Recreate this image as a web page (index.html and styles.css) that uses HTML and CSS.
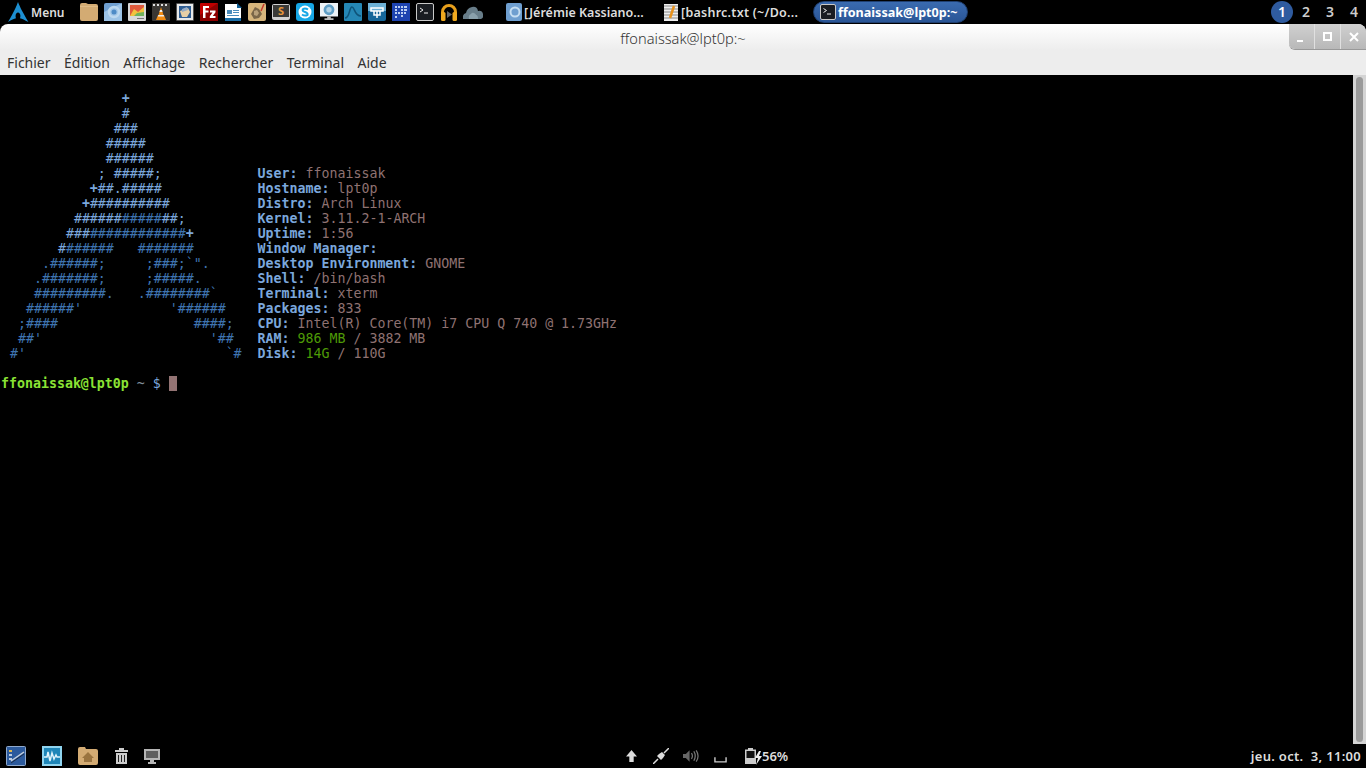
FILE: index.html
```html
<!DOCTYPE html>
<html>
<head>
	<meta charset="utf-8">
	<title>ffonaissak@lpt0p:~</title>
	<link rel="stylesheet" href="styles.css">
</head>
<body>
	<!-- top panel -->
	<div class="panel top">
		<div class="menu">
			<svg class="arch" viewBox="0 0 22 20"><path fill="#1d8fd1" d="M11 0C9.500 4 7 10 1 20c3.500-2.200 6-3.400 8-3.800-.4-.8-.5-1.600-.4-2.400 0-2 1.100-3.300 2.400-3.300s2.400 1.500 2.400 3.300c0 .8-.1 1.600-.4 2.400 2.200.5 4.700 1.700 8.400 3.800C15.500 10 13 5 11 0z"/></svg>
			<span>Menu</span>
		</div>
		<div class="launchers">
			<svg class="ico" viewBox="0 0 18 18"><path fill="#d3ab73" d="M0 2q0-2 2-2h4l2 1h8q2 0 2 2v13q0 2-2 2H2q-2 0-2-2z"/><path fill="#dfbb86" d="M0 3h18v1H0z"/></svg>
			<svg class="ico" viewBox="0 0 18 18"><rect width="18" height="18" rx="2" fill="#6f9fd0"/><path fill="#9cc3e6" d="M0 9L18 0v18H0z"/><circle cx="10" cy="9" r="5" fill="none" stroke="#bcd8ef" stroke-width="2.500"/><circle cx="10" cy="9" r="2.500" fill="#4d8bc6"/></svg>
			<svg class="ico" viewBox="0 0 18 18"><rect width="18" height="18" rx="1" fill="#d8d8d8"/><rect x="2" y="2" width="14" height="11" fill="#e05a3c"/><path fill="#f2c23e" d="M2 13l4-7 4 3 6-5v9z"/><path fill="#6fb25a" d="M6 13l3-3 7-1v4z"/><rect x="9" y="15" width="7" height="1" fill="#777"/></svg>
			<svg class="ico" viewBox="0 0 18 18"><rect width="18" height="18" rx="1" fill="#3a3733"/><path fill="#ddd" d="M1 1h2v2H1zm4 0h2v2H5zm4 0h2v2H9zm4 0h2v2h-2z"/><path fill="#f28c13" d="M9 4l2.500 8h-5z"/><path fill="#f28c13" d="M6 12h6l2 5H4z"/><path fill="#eee" d="M8 7h2l.5 2h-3zM6.300 12h5.400l.5 1.500H5.800z"/></svg>
			<svg class="ico" viewBox="0 0 18 18"><rect x=".5" y=".5" width="17" height="17" fill="#e8e8e8" stroke="#333" stroke-dasharray="1 1"/><rect x="3" y="3" width="12" height="12" fill="#2f5d93"/><path fill="#e7cfa6" d="M4 8l8-3 2 4-3 5H6z"/><path fill="#96acc6" d="M6 6l5-2 1 3-6 2z"/></svg>
			<svg class="ico" viewBox="0 0 18 18"><rect width="18" height="18" rx="1" fill="#bf0000"/><path fill="#8d0000" d="M0 12L18 0v18H0z"/><path fill="#fff" d="M3 3h6v2H5.500v2.500H8.500v2H5.500V15H3zM10 7.500h5.500v1.700L12.800 13H15.500v2H9.800v-1.700L12.500 9.500H10z"/></svg>
			<svg class="ico" viewBox="0 0 18 18"><path fill="#fff" d="M1 1h12l4 4v12H1z"/><path fill="#0f5f95" d="M13 0l5 5h-5z"/><path fill="#1c6fa8" d="M1 15h16v3H1z"/><path fill="#4a8cbc" d="M3 7h5v4H3zM9 7h6v1H9zM9 9h6v1H9zM3 12h12v1H3z"/></svg>
			<svg class="ico" viewBox="0 0 18 18"><rect width="18" height="18" rx="2" fill="#d6b57c"/><path fill="#7a6648" d="M3 11l4-7 4 2 3 5-3 4-5 1z"/><path fill="#b8a07a" d="M6 8l3-1 2 3-2 3-3-1z"/><path stroke="#c63a2a" stroke-width="1.500" d="M16 1l-3 7"/></svg>
			<svg class="ico" viewBox="0 0 18 18"><rect y="1" width="18" height="16" rx="2" fill="#d0d0d0"/><rect x="1" y="2" width="16" height="12" fill="#3a3a38"/><text class="ico-s" x="9" y="12" text-anchor="middle">S</text></svg>
			<svg class="ico" viewBox="0 0 18 18"><rect width="18" height="18" rx="3" fill="#17a7e6"/><circle cx="9" cy="9" r="6.500" fill="#fff"/><path fill="none" stroke="#17a7e6" stroke-width="2" d="M12 6.500Q9 4.500 6.800 6.200 6 8 9 9t2.600 2.800Q9 13.500 6 11.500"/></svg>
			<svg class="ico wide" viewBox="0 0 20 20"><rect width="20" height="15" fill="#edf2f6"/><circle cx="10" cy="7.500" r="6" fill="#5f9dc4"/><circle cx="10" cy="7.500" r="3" fill="#b3d3e6"/><path fill="#bbb" d="M8 15h4v2h3v2H5v-2h3z"/></svg>
			<svg class="ico" viewBox="0 0 18 18"><rect width="18" height="18" rx="1" fill="#2587b5"/><path fill="none" stroke="#0f5479" stroke-width="1.500" d="M1 15c5 0 4-11 7-11s2 9 9 9"/></svg>
			<svg class="ico" viewBox="0 0 18 18"><rect width="18" height="18" rx="2" fill="#17679a"/><path fill="#6db1d6" d="M0 0h18v8H0z"/><path fill="none" stroke="#fff" stroke-width="1.500" d="M3 5h12v3H3zM9 8v7M6 8v4h6V8"/></svg>
			<svg class="ico" viewBox="0 0 18 18"><rect width="18" height="18" fill="#1d43b0"/><path fill="#b9cdf2" d="M3 3h2v2H3zm3 0h2v2H6zm3 0h2v2H9zm3 0h3v2h-3zM3 6h2v2H3zm6 0h2v2H9zm3 0h3v2h-3zM9 9h2v2H9zm3 0h2v2h-2zM3 9h2v2H3zm6 3h2v2H9zm-6 1h2v2H3zm3-4h2v2H6z"/></svg>
			<svg class="ico" viewBox="0 0 18 18"><rect x=".5" y=".5" width="17" height="17" rx="1.500" fill="#1a1d22" stroke="#c9c9c9"/><path fill="none" stroke="#eee" d="M4 5l3 2-3 2M8 10h4"/></svg>
			<svg class="ico" viewBox="0 0 18 18"><path fill="none" stroke="#e8a01c" stroke-width="3" d="M2.500 11V9a6.500 6.500 0 0 1 13 0v2"/><rect x="1" y="9" width="4.500" height="9" rx="1.500" fill="#f0a91f"/><rect x="12.500" y="9" width="4.500" height="9" rx="1.500" fill="#f0a91f"/><path fill="#666" d="M7 8l5 3.500L7 15z"/></svg>
			<svg class="ico wide" viewBox="0 0 20 18"><path fill="#687d89" d="M0 16q-1-5 3-6 1-5 6-6t6 4q4-1 5 3 1 4-2 5z"/><path fill="#8aa0ab" d="M6 16q-1-4 2-5 1-2 3-1t2 2q2 0 2 4z"/></svg>
		</div>
		<div class="tasks">
			<div class="task">
				<svg class="ico-task" viewBox="0 0 16 18"><rect width="16" height="18" rx="2" fill="#6f9fd0"/><circle cx="9" cy="9" r="4.500" fill="none" stroke="#c6def2" stroke-width="2"/></svg>
				<span>[Jérémie Kassiano...</span>
			</div>
			<div class="task loose">
				<svg class="ico-task" viewBox="0 0 16 18"><rect x="1" y="1" width="14" height="17" fill="#eee"/><path stroke="#888" d="M1 3h14M1 6h14M1 9h14M1 12h14M1 15h14"/><path stroke="#e8921c" stroke-width="2.500" d="M11 3L7 15"/></svg>
				<span>[bashrc.txt (~/Do...</span>
			</div>
			<div class="task active">
				<svg class="ico-task" viewBox="0 0 16 16"><rect x=".5" y=".5" width="15" height="15" rx="1.500" fill="#1a1d22" stroke="#c9c9c9"/><path fill="none" stroke="#eee" d="M3.500 4.500l3 2-3 2M7 10h4"/></svg>
				<span>ffonaissak@lpt0p:~</span>
			</div>
		</div>
		<div class="workspaces">
			<span class="ws current">1</span>
			<span class="ws">2</span>
			<span class="ws">3</span>
			<span class="ws">4</span>
		</div>
	</div>

	<!-- terminal window -->
	<div class="window">
		<div class="titlebar">
			<span></span>
			<span class="title">ffonaissak@lpt0p:~</span>
			<div class="buttons">
				<div class="wbtn"><svg viewBox="0 0 10 10"><path fill="#fff" d="M0 8h6v2H0z"/></svg></div>
				<div class="wbtn"><svg viewBox="0 0 10 10"><path fill="none" stroke="#fff" stroke-width="2" d="M1 1h7v7H1z"/></svg></div>
				<div class="wbtn"><svg viewBox="0 0 10 10"><path stroke="#fff" stroke-width="2" d="M1 1l8 8M9 1l-8 8"/></svg></div>
			</div>
		</div>
		<div class="menubar">
			<span>Fichier</span>
			<span>Édition</span>
			<span>Affichage</span>
			<span>Rechercher</span>
			<span>Terminal</span>
			<span>Aide</span>
		</div>
		<div class="term">
<pre class="screen">

               <b class="l">+</b>
               <span class="l">#</span>
              <span class="l">###</span>
             <span class="l">#####</span>
             <span class="l">######</span>
            <span class="l">; #####;</span>            <b class="k">User:</b> <span class="v">ffonaissak</span>
           <b class="l">+</b><span class="l">##.#####</span>            <b class="k">Hostname:</b> <span class="v">lpt0p</span>
          <b class="l">+</b><span class="l">##########</span>           <b class="k">Distro:</b> <span class="v">Arch Linux</span>
         <span class="l">######</span><span class="d">#####</span><span class="l">##;</span>         <b class="k">Kernel:</b> <span class="v">3.11.2-1-ARCH</span>
        <span class="l">###</span><span class="d">############</span><b class="l">+</b>        <b class="k">Uptime:</b> <span class="v">1:56</span>
       <span class="l">#</span><span class="d">######   #######</span>        <b class="k">Window Manager:</b>
     <span class="d">.######;     ;###;`".</span>      <b class="k">Desktop Environment:</b> <span class="v">GNOME</span>
    <span class="d">.#######;     ;#####.</span>       <b class="k">Shell:</b> <span class="v">/bin/bash</span>
    <span class="d">#########.   .########`</span>     <b class="k">Terminal:</b> <span class="v">xterm</span>
   <span class="d">######'           '######</span>    <b class="k">Packages:</b> <span class="v">833</span>
  <span class="d">;####                 ####;</span>   <b class="k">CPU:</b> <span class="v">Intel(R) Core(TM) i7 CPU Q 740 @ 1.73GHz</span>
  <span class="d">##'                     '##</span>   <b class="k">RAM:</b> <span class="g">986 MB</span> <span class="v">/ 3882 MB</span>
 <span class="d">#'                         `#</span>  <b class="k">Disk:</b> <span class="g">14G</span> <span class="v">/ 110G</span>

<b class="p">ffonaissak@lpt0p</b> <span class="t">~</span> <span class="k">$</span> <span class="cursor"> </span></pre>
			<div class="scrollbar"><div class="thumb"></div></div>
		</div>
	</div>

	<!-- bottom panel -->
	<div class="panel bottom">
		<div class="shortcuts">
			<svg class="b1" viewBox="0 0 20 20"><rect x=".5" y=".5" width="19" height="19" rx="1" fill="#2c5a9c" stroke="#8fa9cc"/><path fill="#e0b94f" d="M3 4h3v2H3z"/><path fill="#b9cbe3" d="M3 8h3v2H3zM3 12h3v2H3z"/><path stroke="#c9d3de" stroke-width="1.500" d="M5 15L18 6"/><path stroke="#1a2a44" d="M5 17L18 8"/></svg>
			<svg class="b2" viewBox="0 0 20 20"><rect x="1" y="1" width="18" height="18" fill="#1f86b8" stroke="#8fd4ef" stroke-width="2"/><path fill="none" stroke="#dff3fb" stroke-width="1.500" d="M2 11h3l1-5 2 9 2-8 2 6 2-4 1 2h3"/></svg>
			<svg class="b3" viewBox="0 0 20 20"><path fill="#d3ab73" d="M0 3q0-2 2-2h5l1 2h10q2 0 2 2v12q0 2-2 2H2q-2 0-2-2z"/><path fill="#9a7440" d="M10 6l6 6h-2v4H6v-4H4z"/></svg>
			<svg class="b4" viewBox="0 0 13 16"><path fill="#ccc" d="M0 2h4V0h5v2h4v2H0zM1 5h11v11H1z"/><path stroke="#222" d="M3.500 7v7M6.500 7v7M9.500 7v7"/></svg>
			<svg class="b5" viewBox="0 0 16 15"><path fill="#b5b5b5" d="M0 0h16v11H10v2h2v2H4v-2h2v-2H0z"/><rect x="2" y="2" width="12" height="7" fill="#5e5e5e"/></svg>
		</div>
		<div class="tray">
			<svg class="t1" viewBox="0 0 10 11"><path fill="#ddd" d="M5 0l5 6H7v5H3V6H0z"/></svg>
			<svg class="t2" viewBox="0 0 16 16"><path fill="none" stroke="#ddd" stroke-width="1.500" d="M0 16l5-5M11 5l5-5"/><path fill="#ddd" d="M4 8l4 4 2-2-4-4zM6 6l4 4 2-3-3-3z"/></svg>
			<svg class="t3" viewBox="0 0 17 14"><path fill="#666" d="M0 5h3l4-4v12l-4-4H0z"/><path fill="none" stroke="#777" stroke-width="1.300" d="M9 4q2 3 0 6M11.500 2q3 5 0 10M14 1q4 6 0 12"/></svg>
			<svg class="t4" viewBox="0 0 14 6"><path fill="none" stroke="#ccc" stroke-width="1.500" d="M1 0v5h12V0"/></svg>
			<svg class="t5" viewBox="0 0 17 17"><path fill="#ccc" d="M3 0h5v1.500h3V16H0V1.500h3z"/><rect x="1.500" y="3" width="8" height="7" fill="#111"/><path fill="#eee" d="M14 3l-4 7h3l-2 7 6-9h-3l2-5z"/></svg>
			<span class="pct">56%</span>
		</div>
		<div class="clock">jeu. oct.&nbsp; 3, 11:00</div>
	</div>
</body>
</html>
```

FILE: styles.css
```css
html, body{
	margin: 0;
	height: 100%;
}

body{
	width: 1366px;
	height: 768px;
	overflow: hidden;
	background-color: #000;
	display: flex;
	flex-direction: column;
	font-family: "Noto Sans", sans-serif;
}

svg{
	display: block;
}

.panel{
	background-color: #000;
	color: #ddd;
	display: flex;
	align-items: center;
	flex: none;
	font-size: 13px;
	font-weight: 600;
}

.top{
	height: 24px;
}

.menu{
	display: flex;
	align-items: center;
	width: 80px;
	padding-left: 7px;
	box-sizing: border-box;
	gap: 2px;
	font-size: 12px;
}

.arch{
	width: 22px;
	height: 20px;
}

.launchers{
	display: flex;
	align-items: center;
	gap: 6px;
	width: 424px;
}

.ico{
	width: 18px;
	height: 18px;
	flex: none;
}

.ico.wide{
	width: 20px;
	margin: 0 -1px;
}

.ico-s{
	font: bold 11px "Noto Sans", sans-serif;
	fill: #e8963a;
}

.tasks{
	display: flex;
	align-items: center;
	flex: 1;
	font-size: 12.5px;
}

.task{
	display: flex;
	align-items: center;
	gap: 2px;
	width: 157px;
	padding-left: 2px;
	box-sizing: border-box;
	white-space: nowrap;
}

.task.loose{
	letter-spacing: .25px;
}

.task.active{
	width: 155px;
	height: 22px;
	margin-left: -5px;
	padding-left: 6px;
	border-radius: 11px;
	color: #fff;
	font-weight: 700;
	font-size: 12.6px;
	background: linear-gradient(#3a6bb0, #2a5596);
	border: 1px solid #1f3f70;
}

.ico-task{
	width: 16px;
	height: 18px;
	flex: none;
}

.workspaces{
	display: flex;
	gap: 2px;
	margin-right: 1px;
	font-size: 14px;
}

.ws{
	width: 22px;
	height: 22px;
	line-height: 22px;
	text-align: center;
	color: #ccc;
	border-radius: 50%;
}

.ws.current{
	background-color: #2f5b9f;
	color: #fff;
}

.window{
	flex: 1;
	display: flex;
	flex-direction: column;
	min-height: 0;
}

.titlebar{
	height: 26px;
	display: grid;
	grid-template-columns: 1fr auto 1fr;
	background: linear-gradient(#fff, #ededed);
	border-radius: 8px 8px 0 0;
	color: #333;
	font-size: 14.6px;
	font-weight: 300;
}

.title{
	line-height: 29px;
}

.buttons{
	justify-self: end;
	display: flex;
	height: 25px;
	border-radius: 0 8px 0 6px;
	overflow: hidden;
	background: linear-gradient(#d0d0d0, #b8b8b8);
	box-shadow: 0 1px 0 #999;
}

.wbtn{
	width: 25px;
	display: flex;
	align-items: center;
	justify-content: center;
	border-left: 1px solid #e0e0e0;
}

.wbtn:first-child{
	border-left: 0;
}

.wbtn svg{
	width: 10px;
	height: 10px;
}

.menubar{
	height: 25px;
	background-color: #ededed;
	color: #333;
	display: flex;
	align-items: center;
	gap: 13.5px;
	padding-left: 7px;
	font-size: 14px;
}

.term{
	flex: 1;
	display: flex;
	min-height: 0;
	background-color: #000;
}

.screen{
	flex: 1;
	margin: 0;
	padding: 1px 0 0 2px;
	font-family: "DejaVu Sans Mono", monospace;
	font-size: 13.28px;
	line-height: 15px;
	color: #aaa;
}

.l{ color: #7ba7dc; }
.d{ color: #3f74b0; }
.k{ color: #7ba7dc; }
.v{ color: #8f7272; }
.g{ color: #4e9a06; }
.p{ color: #8ae234; margin-left: -1px; }
.t{ color: #7f8c99; }
.cursor{ background-color: #937373; }

.scrollbar{
	width: 13px;
	background-color: #d4d4d4;
	padding: 2px 3px;
	box-sizing: border-box;
}

.thumb{
	height: 100%;
	background-color: #9a9a9a;
	border-radius: 4px;
}

.bottom{
	height: 24px;
	display: grid;
	grid-template-columns: 626px auto 1fr;
}

.shortcuts{
	display: flex;
	align-items: center;
	padding-left: 6px;
}

.b1{ width: 20px; height: 20px; }
.b2{ width: 20px; height: 20px; margin-left: 16px; }
.b3{ width: 20px; height: 20px; margin-left: 16px; }
.b4{ width: 13px; height: 16px; margin-left: 17px; }
.b5{ width: 16px; height: 15px; margin-left: 16px; }

.tray{
	display: flex;
	align-items: center;
}

.t1{ width: 11px; height: 12px; }
.t2{ width: 16px; height: 16px; margin-left: 16px; }
.t3{ width: 16px; height: 16px; margin-left: 14px; }
.t4{ width: 13px; height: 6px; margin-left: 15px; margin-top: 8px; }
.t5{ width: 17px; height: 17px; margin-left: 18px; }

.pct{
	font-size: 13px;
}

.clock{
	justify-self: end;
	padding-right: 5px;
	white-space: nowrap;
	font-size: 13px;
	letter-spacing: .3px;
}
```
